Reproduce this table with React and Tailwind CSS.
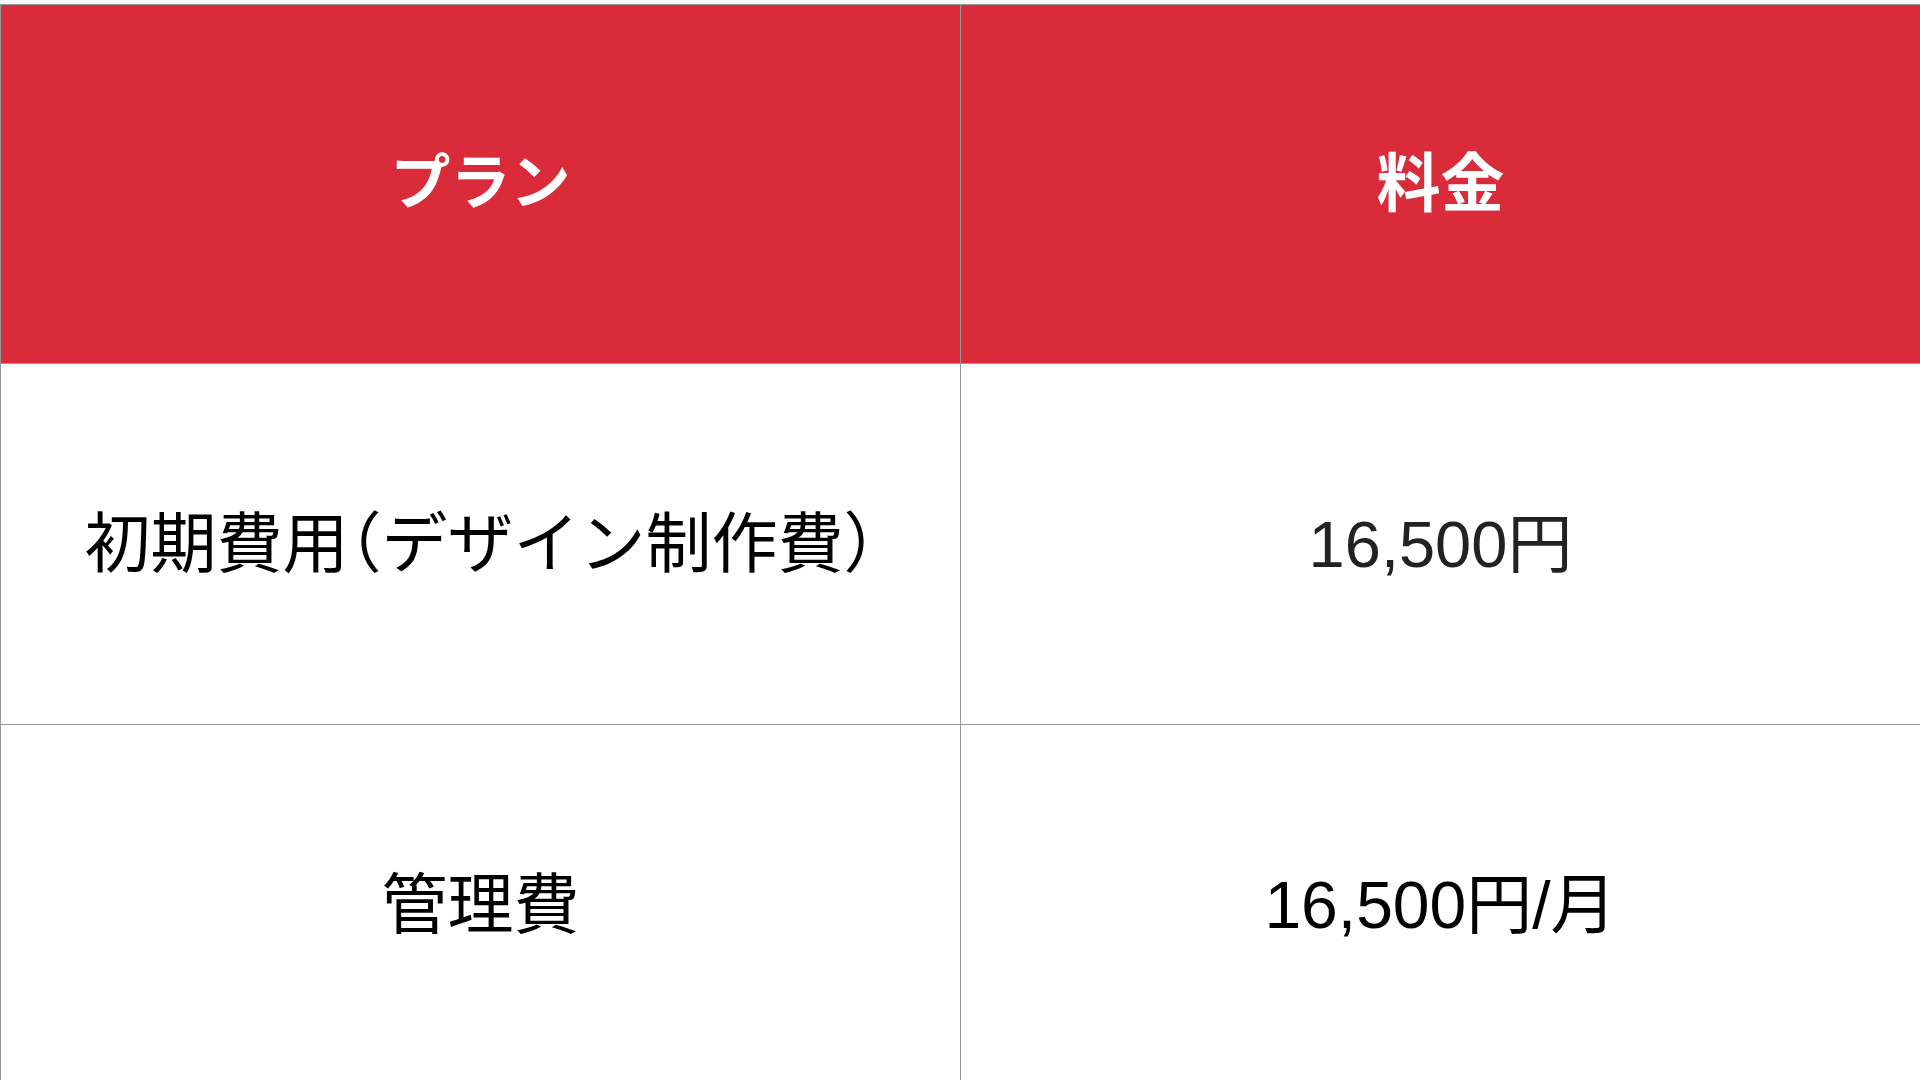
export default function App() {
  const font = { fontFamily: '"Liberation Sans", "Noto Sans CJK JP", sans-serif' };
  return (
    <div className="w-[1920px] h-[1080px] overflow-hidden bg-white pt-[4px]" style={font}>
      <div className="grid grid-cols-[961px_1fr]">
        <div className="h-[360px] bg-[#d92b3a] border-l border-t border-r border-b border-[#999] flex items-center justify-center">
          <span className="text-[60px] font-bold text-white leading-none">プラン</span>
        </div>
        <div className="h-[360px] bg-[#d92b3a] border-t border-b border-[#999] flex items-center justify-center">
          <span className="text-[64px] font-bold text-white leading-none">料金</span>
        </div>
        <div className="h-[361px] border-l border-r border-b border-[#999] flex items-center justify-center">
          <span className="text-[66px] text-black leading-none">
            初期費用<span className="[font-feature-settings:'halt']">（</span>デザイン制作費<span className="[font-feature-settings:'halt']">）</span>
          </span>
        </div>
        <div className="h-[361px] border-b border-[#999] flex items-center justify-center">
          <span className="text-[65px] text-[#222] leading-none">16,500円</span>
        </div>
        <div className="h-[361px] border-l border-r border-b border-[#999] flex items-center justify-center">
          <span className="text-[66px] text-black leading-none">管理費</span>
        </div>
        <div className="h-[361px] border-b border-[#999] flex items-center justify-center">
          <span className="text-[66px] text-black leading-none">16,500円/月</span>
        </div>
      </div>
    </div>
  );
}
